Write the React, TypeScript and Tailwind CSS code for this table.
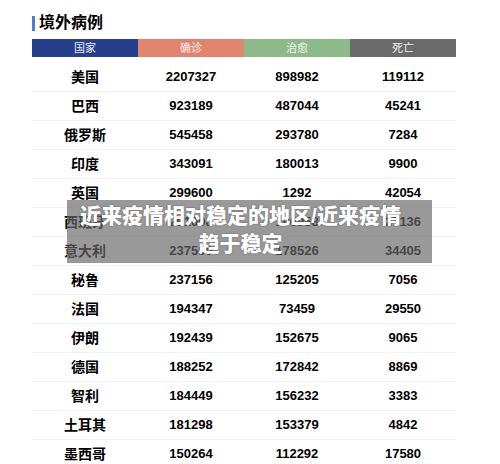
const headers = [
  { label: '国家', bg: 'bg-[#263f8c]' },
  { label: '确诊', bg: 'bg-[#e0846f]' },
  { label: '治愈', bg: 'bg-[#8cb98a]' },
  { label: '死亡', bg: 'bg-[#6b6b6b]' },
];

const rows: [string, string, string, string][] = [
  ['美国', '2207327', '898982', '119112'],
  ['巴西', '923189', '487044', '45241'],
  ['俄罗斯', '545458', '293780', '7284'],
  ['印度', '343091', '180013', '9900'],
  ['英国', '299600', '1292', '42054'],
  ['西班牙', '291008', '196958', '27136'],
  ['意大利', '237500', '178526', '34405'],
  ['秘鲁', '237156', '125205', '7056'],
  ['法国', '194347', '73459', '29550'],
  ['伊朗', '192439', '152675', '9065'],
  ['德国', '188252', '172842', '8869'],
  ['智利', '184449', '156232', '3383'],
  ['土耳其', '181298', '153379', '4842'],
  ['墨西哥', '150264', '112292', '17580'],
];

export default function App() {
  return (
    <div className="relative w-[500px] h-[464px] overflow-hidden bg-white font-['Liberation_Sans','Noto_Sans_CJK_SC',sans-serif] text-black">
      <div className="pl-[32px] pt-[14px] w-[456px]">
        {/* Title */}
        <div className="flex items-center gap-[4px] h-[18px]">
          <div className="w-[3px] h-[15px] bg-[#4b7fd6]" />
          <span className="text-[16px] font-bold leading-none">境外病例</span>
        </div>

        {/* Header */}
        <div className="grid grid-cols-4 mt-[7px] h-[18px]">
          {headers.map((h) => (
            <div key={h.label} className={`${h.bg} flex items-center justify-center text-[11px] text-white/90`}>
              {h.label}
            </div>
          ))}
        </div>

        {/* Rows */}
        <div className="mt-[6px]">
          {rows.map((r) => (
            <div key={r[0]} className="grid grid-cols-4 h-[29px] border-b border-[#f3f3f3] items-center font-bold">
              <div className="text-center text-[14px]">{r[0]}</div>
              <div className="text-center text-[13px]">{r[1]}</div>
              <div className="text-center text-[13px]">{r[2]}</div>
              <div className="text-center text-[13px]">{r[3]}</div>
            </div>
          ))}
        </div>
      </div>

      {/* Caption overlay */}
      <div className="absolute left-[67px] top-[200px] w-[365px] h-[63px] bg-[rgba(105,105,105,0.68)] flex items-center justify-center pr-[18px] pb-[4px]">
        <p className="text-center text-white font-black text-[21px] leading-[28px] [text-shadow:0_0_2px_rgba(0,0,0,0.35)]">
          近来疫情相对稳定的地区/近来疫情
          <br />
          趋于稳定
        </p>
      </div>
    </div>
  );
}
